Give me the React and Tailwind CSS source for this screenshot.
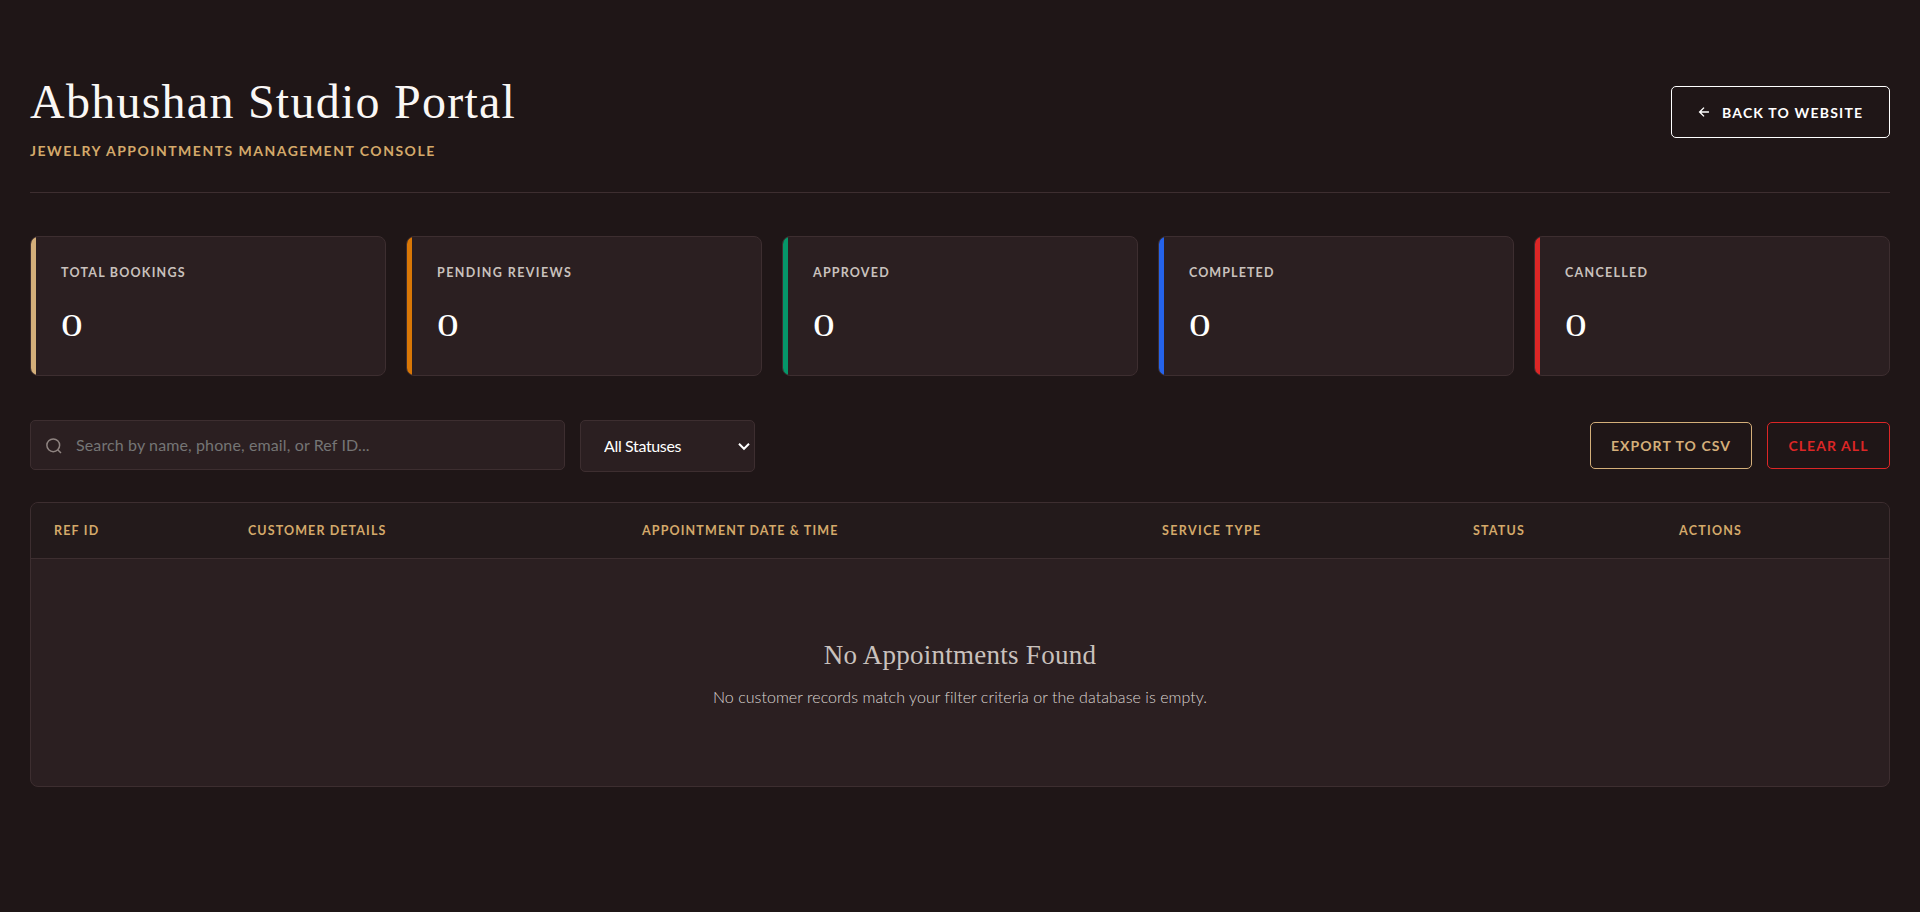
import { useState } from "react";

const stats = [
    { label: "Total Bookings", value: 0, accent: "bg-[#d4af7a]", tracking: "tracking-[1.22px]" },
    { label: "Pending Reviews", value: 0, accent: "bg-[#d97706]", tracking: "tracking-[1.4px]" },
    { label: "Approved", value: 0, accent: "bg-[#059669]", tracking: "tracking-[1.2px]" },
    { label: "Completed", value: 0, accent: "bg-[#2563eb]", tracking: "tracking-[1.1px]" },
    { label: "Cancelled", value: 0, accent: "bg-[#dc2626]", tracking: "tracking-[1.3px]" },
];

const columns = [
    { label: "Ref ID", className: "w-[194px] tracking-[1.2px]" },
    { label: "Customer Details", className: "w-[394px] tracking-[1.1px]" },
    { label: "Appointment Date & Time", className: "w-[520px] tracking-[1.13px]" },
    { label: "Service Type", className: "w-[311px] tracking-[1.4px]" },
    { label: "Status", className: "w-[206px] tracking-[1.2px]" },
    { label: "Actions", className: "tracking-[1.25px]" },
];

function ArrowLeftIcon() {
    return (
        <svg
            className="h-[14px] w-[14px]"
            viewBox="0 0 24 24"
            fill="none"
            stroke="currentColor"
            strokeWidth="2.4"
        >
            <path d="M20.5 12H4.5M12 4.5 4.5 12l7.5 7.5" />
        </svg>
    );
}

function SearchIcon() {
    return (
        <svg
            className="mt-px h-[18px] w-[18px]"
            viewBox="0 0 24 24"
            fill="none"
            stroke="currentColor"
            strokeWidth="2"
        >
            <circle cx="11" cy="11" r="8.5" />
            <path d="m17 17 4.3 4.3" />
        </svg>
    );
}

function StatCard({ stat }) {
    return (
        <div className="flex h-[140px] overflow-hidden rounded-lg border border-[#3d2e30] bg-[#2b1f21]">
            <div className={`w-[5px] ${stat.accent}`} />
            <div className="flex flex-col pl-[25px] pt-[26px]">
                <span
                    className={`text-[12.5px] leading-[20px] font-bold uppercase text-[#c9c1bd] ${stat.tracking}`}
                >
                    {stat.label}
                </span>
                {/* Wide numeral */}
                <span className="mt-[23px] origin-left scale-x-[1.4] self-start font-['Liberation_Serif',serif] text-[31px] leading-[40px] text-white">
                    {stat.value}
                </span>
            </div>
        </div>
    );
}

function StatusSelect({ value, onChange }) {
    return (
        <div className="relative">
            <select
                value={value}
                onChange={(e) => onChange(e.target.value)}
                className="h-[52px] w-[175px] appearance-none rounded-[5px] border border-[#3d2e30] bg-[#2b1f21] pl-[23px] text-[16px] tracking-[-0.35px] text-white"
            >
                <option value="all">All Statuses</option>
                <option value="pending">Pending</option>
                <option value="approved">Approved</option>
                <option value="completed">Completed</option>
                <option value="cancelled">Cancelled</option>
            </select>
            <svg
                className="pointer-events-none absolute top-[22px] right-[5px] h-[9px] w-[12px]"
                viewBox="0 0 12 9"
                fill="none"
                stroke="currentColor"
                strokeWidth="2"
            >
                <path d="M1 1.8 6 6.8l5-5" />
            </svg>
        </div>
    );
}

export default function App() {
    const [search, setSearch] = useState("");
    const [status, setStatus] = useState("all");

    return (
        <div className="min-h-screen bg-[#1f1617] px-[30px] pt-[60px] font-[Lato,sans-serif] text-white">
            <header className="mb-[43px] flex h-[133px] items-center justify-between border-b border-[#3d2e30] pb-7">
                <div className="pt-[10px]">
                    <h1 className="font-['Liberation_Serif',serif] text-[48px] leading-[60px] tracking-[1.25px] text-[#faf7f5]">
                        Abhushan Studio Portal
                    </h1>
                    <p className="mt-[8px] text-[14px] leading-[22px] font-bold uppercase tracking-[1.49px] text-[#d4a96a]">
                        Jewelry Appointments Management Console
                    </p>
                </div>
                <button className="flex h-[52px] w-[219px] items-center gap-[11px] rounded-[5px] border border-white pl-[25px] text-[14px] font-bold uppercase tracking-[1.2px] whitespace-nowrap">
                    <ArrowLeftIcon />
                    Back to Website
                </button>
            </header>

            <section className="mb-[44px] grid grid-cols-5 gap-5">
                {stats.map((stat) => (
                    <StatCard key={stat.label} stat={stat} />
                ))}
            </section>

            <section className="mb-[30px] flex h-[52px] items-start justify-between">
                <div className="flex items-start gap-[15px]">
                    <label className="flex h-[50px] w-[535px] items-center rounded-[5px] border border-[#3d2e30] bg-[#2b1f21] pl-[14px] text-[#8f8481]">
                        <SearchIcon />
                        <input
                            type="text"
                            value={search}
                            onChange={(e) => setSearch(e.target.value)}
                            placeholder="Search by name, phone, email, or Ref ID..."
                            className="ml-[13px] flex-1 pb-px text-[16px] tracking-[0.12px] text-white outline-none placeholder:text-[#757575]"
                        />
                    </label>
                    <StatusSelect value={status} onChange={setStatus} />
                </div>
                <div className="mt-[2px] flex gap-[15px] text-[14px] font-bold">
                    <button className="h-[47px] w-[162px] rounded-[5px] border border-[#d4af7a] tracking-[1.07px] text-[#d4af7a] uppercase">
                        Export to CSV
                    </button>
                    <button className="h-[47px] w-[123px] rounded-[5px] border border-[#dc2626] tracking-[1.06px] text-[#dc2626] uppercase">
                        Clear All
                    </button>
                </div>
            </section>

            <section className="h-[285px] overflow-hidden rounded-lg border border-[#3d2e30] bg-[#2b1f21]">
                <table className="w-full table-fixed border-collapse">
                    <thead>
                        <tr className="h-[55px] border-b border-[#3d2e30] bg-[#231a1b]">
                            {columns.map((column) => (
                                <th
                                    key={column.label}
                                    className={`pt-[2px] pl-[23px] text-left text-[12.5px] font-bold uppercase text-[#d4a96a] ${column.className}`}
                                >
                                    {column.label}
                                </th>
                            ))}
                        </tr>
                    </thead>
                    <tbody>
                        <tr>
                            <td colSpan={6} className="pt-[76px] text-center text-[#c9c1bd]">
                                <h3 className="font-['Liberation_Serif',serif] text-[27px] leading-[40px] tracking-[0.25px]">
                                    No Appointments Found
                                </h3>
                                <p className="mt-[10px] text-[16px] leading-[24px] font-light tracking-[0.05px] text-[#dcd5d1]">
                                    No customer records match your filter criteria or the database is empty.
                                </p>
                            </td>
                        </tr>
                    </tbody>
                </table>
            </section>
        </div>
    );
}
